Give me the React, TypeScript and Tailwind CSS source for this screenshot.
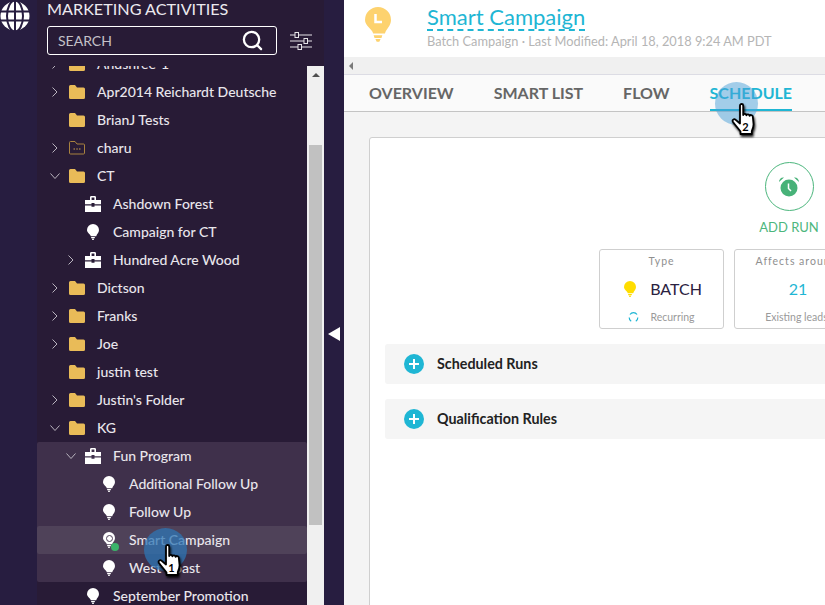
import { Search } from "lucide-react";

type Kind = "folder" | "dotted" | "program" | "bulb" | "active";

type Row = {
  label: string;
  level: 0 | 1 | 2;
  kind: Kind;
  arrow?: "right" | "down";
};

const topRows: Row[] = [
  { label: "Andshree-1", level: 0, kind: "folder", arrow: "right" },
  { label: "Apr2014 Reichardt Deutsche", level: 0, kind: "folder", arrow: "right" },
  { label: "BrianJ Tests", level: 0, kind: "folder" },
  { label: "charu", level: 0, kind: "dotted", arrow: "right" },
  { label: "CT", level: 0, kind: "folder", arrow: "down" },
  { label: "Ashdown Forest", level: 1, kind: "program" },
  { label: "Campaign for CT", level: 1, kind: "bulb" },
  { label: "Hundred Acre Wood", level: 1, kind: "program", arrow: "right" },
  { label: "Dictson", level: 0, kind: "folder", arrow: "right" },
  { label: "Franks", level: 0, kind: "folder", arrow: "right" },
  { label: "Joe", level: 0, kind: "folder", arrow: "right" },
  { label: "justin test", level: 0, kind: "folder" },
  { label: "Justin's Folder", level: 0, kind: "folder", arrow: "right" },
  { label: "KG", level: 0, kind: "folder", arrow: "down" },
];

const levelPad = { 0: "pl-[13px]", 1: "pl-[29px]", 2: "pl-[45px]" };

function FolderIcon() {
  return (
    <svg width="16" height="14" viewBox="0 0 16 14">
      <path d="M1.5 0H6l2 2.5h6.500A1.500 1.500 0 0 1 16 4v8.500a1.500 1.500 0 0 1-1.500 1.500h-13A1.500 1.500 0 0 1 0 12.500V1.500A1.500 1.500 0 0 1 1.500 0z" fill="#e9bb58" />
    </svg>
  );
}

function DottedFolderIcon() {
  return (
    <svg width="16" height="14" viewBox="0 0 16 14" fill="none">
      <path d="M1.500.5H6l2 2.500h6.500a1 1 0 0 1 1 1v8a1 1 0 0 1-1 1h-13a1 1 0 0 1-1-1v-10.500a1 1 0 0 1 1-1z" stroke="#a8823f" />
      <path d="M4.500 8h1.500M7.300 8h1.500M10 8h1.500" stroke="#c9a04f" strokeWidth="1.200" />
    </svg>
  );
}

function ProgramIcon() {
  return (
    <svg width="16" height="16" viewBox="0 0 16 16" fill="#fff">
      <path d="M5 4V1.300C5 .6 5.600 0 6.300 0h3.400C10.400 0 11 .6 11 1.300V4H9.400V1.600H6.600V4z" />
      <path d="M0 4h16v4.300H9.500V7h-3v1.300H0z" />
      <path d="M0 9.500h6.500v1.300h3V9.500H16V16H0z" />
    </svg>
  );
}

function BulbIcon({ color = "#fff", size = 12 }: { color?: string; size?: number }) {
  return (
    <svg width={size} height={(size * 16) / 12} viewBox="0 0 12 16" fill={color}>
      <path d="M6 0a6 6 0 0 1 6 6c0 2.700-2 3.800-2.800 6.200H3.800C3 9.800 0 8.700 0 6a6 6 0 0 1 6-6z" />
      <path d="M4 13h4l-.4 1.300H4.400zM4.800 14.800h2.400L6.600 16H5.400z" />
    </svg>
  );
}

function ActiveBulbIcon() {
  return (
    <div className="relative">
      <BulbIcon />
      <div className="absolute left-[2.500px] top-[2.500px] h-[7px] w-[7px] rounded-full border border-[#4f4259] bg-white" />
      <div className="absolute left-[8px] top-[11px] h-[8px] w-[8px] rounded-full bg-[#3bb36a]" />
    </div>
  );
}

function RowIcon({ kind }: { kind: Kind }) {
  if (kind === "folder") return <FolderIcon />;
  if (kind === "dotted") return <DottedFolderIcon />;
  if (kind === "program") return <ProgramIcon />;
  if (kind === "active") return <ActiveBulbIcon />;
  return <BulbIcon />;
}

function Arrow({ dir }: { dir?: "right" | "down" }) {
  if (!dir) return <div className="w-[10px]" />;
  return (
    <svg width="10" height="10" viewBox="0 0 10 10" fill="none" stroke="#b9b4bf" strokeWidth="1">
      {dir === "right" ? <path d="M2.500.500 7 5 2.500 9.500" /> : <path d="M.500 2.500 5 7.500 9.500 2.500" />}
    </svg>
  );
}

function TreeRow({ row, selected }: { row: Row; selected?: boolean }) {
  return (
    <div
      className={`flex h-[28px] shrink-0 items-center ${levelPad[row.level]} ${selected ? "rounded-[2px] bg-[#4f4259]" : ""}`}
    >
      <Arrow dir={row.arrow} />
      <div className="ml-[9px] flex w-[16px] justify-center">
        <RowIcon kind={row.kind} />
      </div>
      <span className="mb-[2px] ml-[12px] whitespace-nowrap text-[14px] font-medium text-[#e9e6ec]">{row.label}</span>
    </div>
  );
}

function GlobeIcon() {
  return (
    <svg width="30" height="30" viewBox="0 0 30 30" fill="none">
      <circle cx="15" cy="15" r="14.500" fill="#fff" />
      <ellipse cx="15" cy="15" rx="8" ry="15.500" stroke="#271d40" strokeWidth="2" />
      <path d="M15 0v30M0 10.500h30M0 19.500h30" stroke="#271d40" strokeWidth="2" />
    </svg>
  );
}

function SlidersIcon() {
  return (
    <svg width="22" height="18" viewBox="0 0 22 18" fill="none" stroke="#e6e4e8">
      <path d="M0 3h5M9 3h13M0 9h14M18 9h4M0 15h8M12 15h10" />
      <rect x="5" y=".5" width="3.500" height="5" />
      <rect x="14" y="6.500" width="3.500" height="5" />
      <rect x="8" y="12.500" width="3.500" height="5" />
    </svg>
  );
}

// hand cursor with the step number on it
function HandCursor({ n }: { n: number }) {
  return (
    <div className="relative h-[34px] w-[27px]">
      <svg width="27" height="34" viewBox="0 0 27 34" className="drop-shadow-[1px_2px_1px_rgba(0,0,0,0.85)]">
        <path
          d="M9 2.500c0-2 3.200-2 3.200 0V12c.3-1.500 3-1.500 3.200.3.400-1.500 3-1.300 3.200.500.500-1.200 3-1 3.200.8l.7 7c.3 3-.6 5-1.700 7.400V31H9.500v-2.500C7 25 4.500 22.500 2 19c-1.300-2 1-3.700 2.700-2.200L9 20.500z"
          fill="#fff"
          stroke="#000"
          strokeWidth="1.800"
          strokeLinejoin="round"
        />
      </svg>
      <span className="absolute left-[9px] top-[17px] w-[11px] text-center text-[11px] font-bold leading-[14px] text-black">{n}</span>
    </div>
  );
}

function Sidebar() {
  return (
    <div className="flex h-full w-[287px] shrink-0 flex-col bg-[#281b36]">
      <div className="flex h-[66px] shrink-0 flex-col pl-[10px]">
        <div className="mt-[-1px] whitespace-nowrap text-[16.200px] leading-[20px] text-[#ebe9ee]">MARKETING ACTIVITIES</div>
        <div className="mt-[7px] flex items-center">
          <div className="flex h-[29px] w-[230px] items-center justify-between rounded-[3px] border border-white pl-[10px] pr-[12px]">
            <span className="text-[14px] text-[#c4c1c8]">SEARCH</span>
            <Search size={23} strokeWidth={2.400} color="#fff" />
          </div>
          <div className="ml-[13px]">
            <SlidersIcon />
          </div>
        </div>
      </div>
      <div className="flex min-h-0 flex-1">
        <div className="flex w-[270px] flex-col overflow-hidden">
          <div className="mt-[-16px] flex flex-col">
            {topRows.map((r) => (
              <TreeRow key={r.label} row={r} />
            ))}
            <div className="flex flex-col rounded-[2px] bg-[#3f304b]">
              <TreeRow row={{ label: "Fun Program", level: 1, kind: "program", arrow: "down" }} />
              <TreeRow row={{ label: "Additional Follow Up", level: 2, kind: "bulb" }} />
              <TreeRow row={{ label: "Follow Up", level: 2, kind: "bulb" }} />
              <TreeRow row={{ label: "Smart Campaign", level: 2, kind: "active" }} selected />
              <TreeRow row={{ label: "West Coast", level: 2, kind: "bulb" }} />
            </div>
            <TreeRow row={{ label: "September Promotion", level: 1, kind: "bulb" }} />
          </div>
        </div>
        <div className="flex w-[17px] shrink-0 flex-col items-center bg-[#f0f0f0]">
          <div className="mt-[7px] h-0 w-0 border-x-[4px] border-b-[4px] border-x-transparent border-b-[#505050]" />
          <div className="mt-[68px] h-[380px] w-[13px] bg-[#c1c1c1]" />
        </div>
      </div>
    </div>
  );
}

function StatBox({ title, children, foot }: { title: string; children: React.ReactNode; foot: React.ReactNode }) {
  return (
    <div className="flex h-[80px] w-[125px] shrink-0 flex-col items-center rounded-[3px] border border-[#cfcfcf] pt-[4px]">
      <div className="whitespace-nowrap text-[10.500px] leading-[14px] tracking-[1px] text-[#8f8f8f]">{title}</div>
      <div className="flex h-[42px] items-center pl-[3px]">{children}</div>
      <div className="flex items-center whitespace-nowrap text-[10.500px] leading-[14px] text-[#9a9a9a]">{foot}</div>
    </div>
  );
}

function Section({ label }: { label: string }) {
  return (
    <div className="flex h-[40px] items-center rounded-[3px] bg-[#f5f5f5] pl-[19px]">
      <div className="flex h-[20px] w-[20px] items-center justify-center rounded-full bg-[#1fb6d4]">
        <svg width="10" height="10" viewBox="0 0 10 10" stroke="#fff" strokeWidth="2">
          <path d="M5 0v10M0 5h10" />
        </svg>
      </div>
      <span className="ml-[13px] text-[14.300px] font-bold text-[#222]">{label}</span>
    </div>
  );
}

function Main() {
  return (
    <div className="flex h-full min-w-0 flex-1 flex-col overflow-hidden bg-white">
      <div className="flex h-[57px] shrink-0 pl-[21px] pt-[7px]">
        <div className="relative h-[34px] w-[26px]">
          <BulbIcon color="#fdd26e" size={26} />
          <svg width="10" height="12" viewBox="0 0 10 12" className="absolute left-[9px] top-[7px]" stroke="#fff" strokeWidth="2.500" fill="none">
            <path d="M1.500 0v8H8" />
          </svg>
        </div>
        <div className="ml-[36px] flex flex-col">
          <div className="mt-[-3px] w-fit border-b-2 border-dashed border-[#1fb6d4] text-[22px] leading-[25px] text-[#1fb6d4]">Smart Campaign</div>
          <div className="mt-[2px] whitespace-nowrap text-[12.800px] leading-[16px] text-[#b5b5b5]">Batch Campaign · Last Modified: April 18, 2018 9:24 AM PDT</div>
        </div>
      </div>
      <div className="flex h-[17px] shrink-0 items-center bg-[#f0f0f0] pl-[5px]">
        <div className="h-0 w-0 border-y-[4px] border-r-[4px] border-y-transparent border-r-[#7a7a7a]" />
      </div>
      <div className="relative flex h-[38px] shrink-0 items-end gap-[40px] border-y border-t-[#dcdce4] border-b-[#c4c4c4] bg-[#fafafa] pl-[25px] text-[16px] font-bold text-[#666]">
        <div className="pb-[8px] leading-[20px]">OVERVIEW</div>
        <div className="pb-[8px] leading-[20px]">SMART LIST</div>
        <div className="pb-[8px] leading-[20px]">FLOW</div>
        <div className="border-b-2 border-[#1fb6d4] pb-[6px] leading-[20px] text-[#1fb6d4]">SCHEDULE</div>
      </div>
      <div className="min-h-0 flex-1 bg-[#f4f4f4] pl-[25px] pt-[25px]">
        <div className="flex h-[600px] w-[840px] flex-col rounded-[3px] border border-[#cfcfcf] bg-white">
          <div className="flex flex-col items-center pt-[24px]">
            <div className="flex h-[49px] w-[49px] items-center justify-center rounded-full border border-[#4cb67d]">
              <svg width="22" height="22" viewBox="0 0 22 22" fill="#47b278">
                <circle cx="11" cy="12" r="8.500" />
                <path d="M1 6c0-3 2.500-5 5-4.500zM21 6c0-3-2.500-5-5-4.500z" />
                <path d="M10.500 7.500v5l2.500 2.500" stroke="#fff" strokeWidth="1.500" fill="none" />
              </svg>
            </div>
            <div className="mt-[6px] text-[13px] leading-[20px] text-[#4cb67d]">ADD RUN</div>
          </div>
          <div className="mt-[12px] flex gap-[10px] pl-[229px]">
            <StatBox
              title="Type"
              foot={
                <>
                  <svg width="11" height="11" viewBox="0 0 11 11" fill="none" stroke="#1fb6d4" strokeWidth="1.200" className="mr-[11px]">
                    <path d="M2 2.500a4.200 4.200 0 0 1 7 0M9.800 5.500a4.200 4.200 0 0 1-2 3.700M3.200 9.200a4.200 4.200 0 0 1-2-3.700" />
                  </svg>
                  Recurring
                </>
              }
            >
              <BulbIcon color="#ffdd00" />
              <span className="ml-[14px] text-[16px] text-[#2a2140]">BATCH</span>
            </StatBox>
            <StatBox title="Affects around" foot="Existing leads">
              <span className="text-[16px] text-[#1fb6d4]">21</span>
            </StatBox>
          </div>
          <div className="mt-[15px] flex flex-col gap-[15px] px-[15px]">
            <Section label="Scheduled Runs" />
            <Section label="Qualification Rules" />
          </div>
        </div>
      </div>
    </div>
  );
}

export default function App() {
  return (
    <div className="relative flex h-[605px] w-[825px] overflow-hidden bg-[#271d40] font-['Lato',sans-serif]">
      <div className="w-[37px] shrink-0 pt-[1px]">
        <GlobeIcon />
      </div>
      <Sidebar />
      <div className="flex w-[20px] shrink-0 justify-center pt-[327px]">
        <div className="h-0 w-0 border-y-[7px] border-r-[12px] border-y-transparent border-r-white" />
      </div>
      <Main />
      {/* click markers */}
      <div className="absolute left-[144px] top-[528px] h-[43px] w-[43px] rounded-full bg-[#2d76b4]/75" />
      <div className="absolute left-[157px] top-[544px]">
        <HandCursor n={1} />
      </div>
      <div className="absolute left-[715px] top-[82px] h-[43px] w-[43px] rounded-full bg-[#4a9fd8]/50" />
      <div className="absolute left-[731px] top-[103px]">
        <HandCursor n={2} />
      </div>
    </div>
  );
}
